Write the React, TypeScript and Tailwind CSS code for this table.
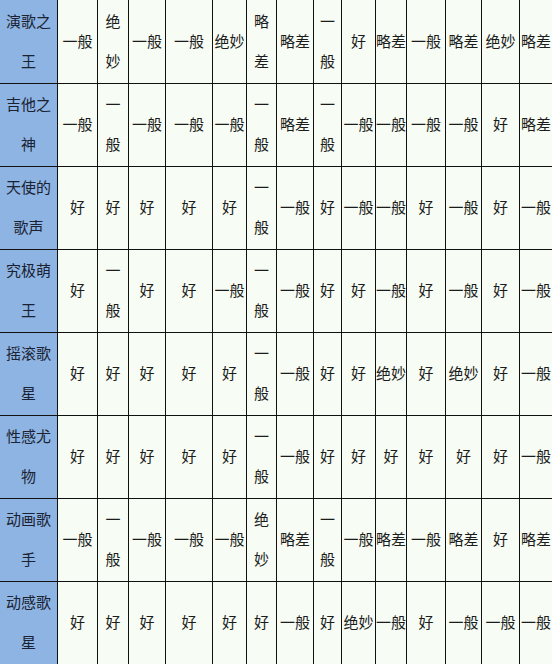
const widths = "grid-cols-[58px_40px_31px_37px_47px_34px_30px_37px_28px_34px_31px_39px_36px_38px_33px]";

// columns where two-character values break onto two lines
const narrowCols = [1, 5, 7];

const rows: { name: [string, string]; values: string[] }[] = [
  { name: ["演歌之", "王"], values: ["一般", "绝妙", "一般", "一般", "绝妙", "略差", "略差", "一般", "好", "略差", "一般", "略差", "绝妙", "略差"] },
  { name: ["吉他之", "神"], values: ["一般", "一般", "一般", "一般", "一般", "一般", "略差", "一般", "一般", "一般", "一般", "一般", "好", "略差"] },
  { name: ["天使的", "歌声"], values: ["好", "好", "好", "好", "好", "一般", "一般", "好", "一般", "一般", "好", "一般", "好", "一般"] },
  { name: ["究极萌", "王"], values: ["好", "一般", "好", "好", "一般", "一般", "一般", "好", "好", "一般", "好", "一般", "好", "一般"] },
  { name: ["摇滚歌", "星"], values: ["好", "好", "好", "好", "好", "一般", "一般", "好", "好", "绝妙", "好", "绝妙", "好", "一般"] },
  { name: ["性感尤", "物"], values: ["好", "好", "好", "好", "好", "一般", "一般", "好", "好", "好", "好", "好", "好", "一般"] },
  { name: ["动画歌", "手"], values: ["一般", "一般", "一般", "一般", "一般", "绝妙", "略差", "一般", "一般", "略差", "一般", "略差", "好", "略差"] },
  { name: ["动感歌", "星"], values: ["好", "好", "好", "好", "好", "好", "一般", "好", "绝妙", "一般", "好", "一般", "一般", "一般"] },
];

function Cell({ text, col }: { text: string; col: number }) {
  const split = narrowCols.includes(col) && text.length > 1;
  return (
    <div className="flex items-center justify-center border-r border-b border-[#111] bg-[#f7fcf4] text-center leading-[40px] whitespace-nowrap">
      {split ? (
        <div className="flex flex-col">
          {text.split("").map((ch, i) => (
            <span key={i}>{ch}</span>
          ))}
        </div>
      ) : (
        <span>{text}</span>
      )}
    </div>
  );
}

export default function App() {
  return (
    <div
      className="w-[552px] h-[664px] overflow-hidden bg-[#f7fcf4] text-[15px] text-[#1c1c1c]"
      style={{ fontFamily: '"Liberation Sans", "Noto Sans CJK SC", sans-serif' }}
    >
      <div className={`grid ${widths} grid-rows-[84px_83px_83px_83px_83px_83px_83px_83px] w-[553px]`}>
        {rows.map((row, r) => (
          <div key={r} className="contents">
            {/* singer name */}
            <div className="flex flex-col items-center justify-center border-r border-b border-[#111] bg-[#8db4e2] leading-[40px] text-[#1a2233]">
              <span>{row.name[0]}</span>
              <span>{row.name[1]}</span>
            </div>
            {row.values.map((v, c) => (
              <Cell key={c} text={v} col={c} />
            ))}
          </div>
        ))}
      </div>
    </div>
  );
}
